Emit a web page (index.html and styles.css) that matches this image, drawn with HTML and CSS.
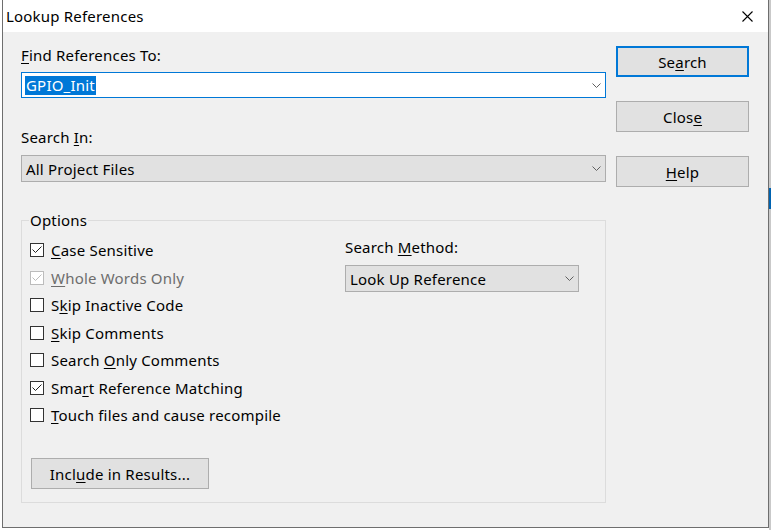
FILE: index.html
```html
<!DOCTYPE html>
<html>
<head>
<meta charset="utf-8">
<link rel="stylesheet" href="styles.css">
</head>
<body>
<div class="window">
  <div class="titlebar">
    <span class="title">Lookup References</span>
    <svg class="close" width="11" height="11" viewBox="0 0 11 11"><path d="M0.5 0.5 L10.5 10.5 M10.5 0.5 L0.5 10.5" stroke="#000" stroke-width="1.1" fill="none"/></svg>
  </div>
  <div class="content">
    <div class="main">
      <div class="label"><u>F</u>ind References To:</div>
      <div class="combo combo-edit">
        <span class="sel">GPIO_Init</span>
        <svg class="chev" width="9" height="5" viewBox="0 0 9 5"><polyline points="0.5,0.5 4.5,4.5 8.5,0.5" fill="none" stroke="#606060" stroke-width="1"/></svg>
      </div>
      <div class="label label-in">Search <u>I</u>n:</div>
      <div class="combo combo-list">
        <span>All Project Files</span>
        <svg class="chev" width="9" height="5" viewBox="0 0 9 5"><polyline points="0.5,0.5 4.5,4.5 8.5,0.5" fill="none" stroke="#606060" stroke-width="1"/></svg>
      </div>
      <fieldset class="options">
        <legend>Options</legend>
        <div class="opt-grid">
          <div class="checks">
            <div class="row"><span class="box"><svg width="12" height="12" viewBox="0 0 12 12"><polyline points="1.5,5.5 4.5,8.5 10.5,2.5" fill="none" stroke="#222" stroke-width="1"/></svg></span><span><u>C</u>ase Sensitive</span></div>
            <div class="row disabled"><span class="box"><svg width="12" height="12" viewBox="0 0 12 12"><polyline points="1.5,5.5 4.5,8.5 10.5,2.5" fill="none" stroke="#bcbcbc" stroke-width="1"/></svg></span><span><u>W</u>hole Words Only</span></div>
            <div class="row"><span class="box"></span><span>S<u>k</u>ip Inactive Code</span></div>
            <div class="row"><span class="box"></span><span><u>S</u>kip Comments</span></div>
            <div class="row"><span class="box"></span><span>Search <u>O</u>nly Comments</span></div>
            <div class="row"><span class="box"><svg width="12" height="12" viewBox="0 0 12 12"><polyline points="1.5,5.5 4.5,8.5 10.5,2.5" fill="none" stroke="#222" stroke-width="1"/></svg></span><span>Sma<u>r</u>t Reference Matching</span></div>
            <div class="row"><span class="box"></span><span><u>T</u>ouch files and cause recompile</span></div>
          </div>
          <div class="method">
            <div class="label method-label">Search <u>M</u>ethod:</div>
            <div class="combo combo-list combo-method">
              <span>Look Up Reference</span>
              <svg class="chev" width="9" height="5" viewBox="0 0 9 5"><polyline points="0.5,0.5 4.5,4.5 8.5,0.5" fill="none" stroke="#606060" stroke-width="1"/></svg>
            </div>
          </div>
        </div>
        <button class="btn btn-include">Incl<u>u</u>de in Results...</button>
      </fieldset>
    </div>
    <div class="buttons">
      <button class="btn btn-default">Se<u>a</u>rch</button>
      <button class="btn">Clos<u>e</u></button>
      <button class="btn"><u>H</u>elp</button>
    </div>
  </div>
</div>
</body>
</html>
```
FILE: styles.css
```css
html, body {
  margin: 0;
}
body {
  width: 771px;
  height: 530px;
  overflow: hidden;
  box-sizing: border-box;
  padding-left: 2px;
  font-family: "Noto Sans", "DejaVu Sans", sans-serif;
  font-size: 15px;
  letter-spacing: 0.2px;
  line-height: 20px;
  color: #000;
  background:
    linear-gradient(#0063b1, #0063b1) no-repeat right 0 top 188px / 2px 21px,
    linear-gradient(#c9c9c9, #c9c9c9) no-repeat right top / 2px 100%,
    #ffffff;
}
u {
  text-underline-offset: 2px;
}
.window {
  width: 767px;
  height: 528px;
  box-sizing: border-box;
  border: 1px solid #6e6e6e;
  border-top: none;
  background: #f0f0f0;
  display: flex;
  flex-direction: column;
}
.titlebar {
  height: 32px;
  flex: none;
  background: #ffffff;
  display: flex;
  align-items: center;
  justify-content: space-between;
  padding: 0 15px 0 3px;
}
.title {
  font-size: 15px;
}
.close {
  display: block;
  margin-top: 1px;
}
.content {
  display: flex;
  gap: 10px;
  padding: 13px 19px 0 18px;
}
.main {
  width: 585px;
  display: flex;
  flex-direction: column;
}
.label {
  height: 20px;
  white-space: nowrap;
}
.label-in {
  margin-top: 29px;
}
.combo {
  box-sizing: border-box;
  display: flex;
  align-items: center;
  justify-content: space-between;
  padding: 0 4px 0 4px;
}
.combo-edit {
  height: 26px;
  margin-top: 7px;
  border: 1px solid #0078d7;
  background: #ffffff;
  padding-left: 3px;
}
.combo-list {
  height: 27px;
  margin-top: 8px;
  border: 1px solid #adadad;
  background: #e1e1e1;
}
.chev {
  display: block;
}
.sel {
  background: #0078d7;
  color: #ffffff;
  padding: 0 1px;
  line-height: 19px;
}
.options {
  margin: 28px 0 0 0;
  padding: 5px 0 13px 8px;
  border: 1px solid #dcdcdc;
  min-width: 0;
}
.options legend {
  margin-left: -1px;
  padding: 0 1px;
  line-height: 21px;
}
.opt-grid {
  display: grid;
  grid-template-columns: 315px 234px;
}
.checks {
  display: flex;
  flex-direction: column;
}
.row {
  display: flex;
  align-items: center;
  gap: 7px;
  height: 28px;
  white-space: nowrap;
}
.row:nth-child(even) {
  height: 27px;
}
.box {
  align-self: flex-start;
  margin-top: 7px;
  width: 14px;
  height: 14px;
  box-sizing: border-box;
  border: 1px solid #333333;
  background: #ffffff;
  display: flex;
  align-items: center;
  justify-content: center;
}
.box svg {
  display: block;
}
.disabled {
  color: #6d6d6d;
}
.disabled .box {
  border-color: #bcbcbc;
}
.method-label {
  margin-top: 1px;
}
.combo-method {
  width: 234px;
}
.btn {
  display: block;
  box-sizing: border-box;
  height: 31px;
  margin: 0;
  padding: 0;
  border: 1px solid #adadad;
  background: #e1e1e1;
  font-family: inherit;
  font-size: 15px;
  letter-spacing: 0.2px;
  line-height: 20px;
  color: #000;
}
.btn-include {
  width: 178px;
  margin: 29px 0 0 1px;
}
.buttons {
  width: 133px;
  flex: none;
  display: flex;
  flex-direction: column;
  gap: 24px;
  margin-top: 1px;
}
.buttons .btn {
  width: 133px;
}
.btn-default {
  border: 2px solid #0078d7;
}
```
